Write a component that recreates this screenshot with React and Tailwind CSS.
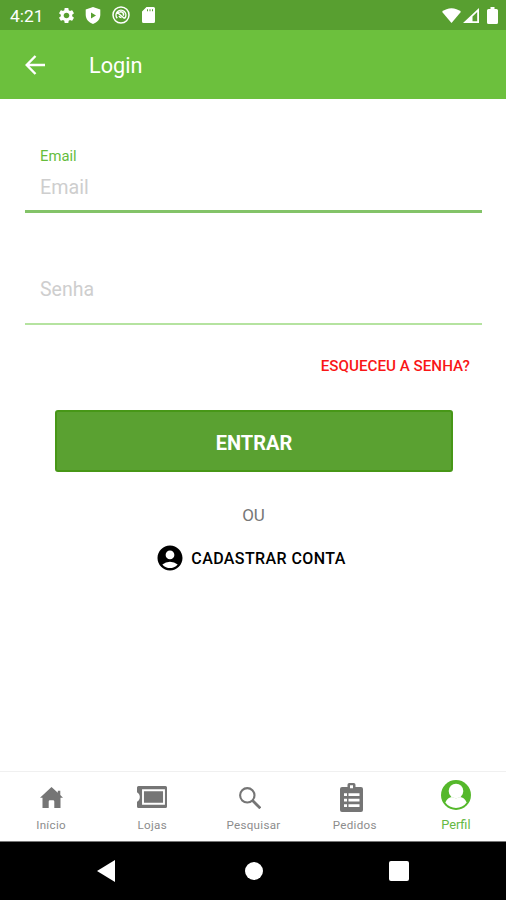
import { MdAccountCircle, MdSettings } from 'react-icons/md'

export default function App() {
  return (
    <div className="flex flex-col w-full h-[900px] bg-white overflow-hidden font-['Roboto',sans-serif]">
      <StatusBar />
      <header className="flex items-center h-[69px] pl-[25px] bg-[#6cc03d] text-white">
        <svg className="w-[21px] h-5" viewBox="0 0 21 20" fill="none" stroke="currentColor" strokeWidth="2.4">
          <path d="M20 10H2M10.500 1L1.700 10l8.800 9" />
        </svg>
        <h1 className="ml-[43px] text-[21.7px] leading-7 pt-[3px]">Login</h1>
      </header>
      <LoginForm />
      <TabBar />
      <SystemNav />
    </div>
  )
}

function StatusBar() {
  return (
    <div className="flex items-center h-[30px] shrink-0 pl-[10px] pr-2 bg-[#589f30] text-white">
      <span className="w-[47px] text-[17.400px] leading-5 pt-0.5">4:21</span>
      <MdSettings className="w-[19px] h-[19px]" />
      <svg className="w-4 h-[17px] ml-[9px]" viewBox="0 0 16 17" fill="currentColor">
        <path fillRule="evenodd" d="M8 0l7.3 2.6v5.2c0 4.2-3 7.9-7.3 9.2C3.700 15.700.7 12 .7 7.800V2.600zM6 5.500v6l5-3z" />
      </svg>
      <svg className="w-[18px] h-[18px] ml-[11px]" viewBox="0 0 18 18" fill="none" stroke="currentColor" strokeWidth="1.500">
        <circle cx="9" cy="9" r="8" />
        <path d="M5.200 12.200a4.900 4.900 0 1 1 7.500 0M4.500 7.500l2.500-1M6.500 7.500l6 5" />
        <path d="M7.200 6.500a2.600 2.600 0 0 1 4 3.200M7 10a2.600 2.600 0 0 0 2.500 1.500" />
      </svg>
      <svg className="w-[13px] h-4 ml-3" viewBox="0 0 13 16" fill="currentColor">
        <path fillRule="evenodd" d="M4.500 0H11.500Q13 0 13 1.500V14.500Q13 16 11.500 16H1.500Q0 16 0 14.500V4.500zM5 2.300v2h1v-2zM7.500 2.300v2h1v-2zM10 2.300v2h1v-2z" />
      </svg>
      <div className="flex items-center ml-auto">
        <svg className="w-[19px] h-[15px]" viewBox="0 0 19 15" fill="currentColor">
          <path d="M9.500 15L0 3.800C5.500-1 13.500-1 19 3.800z" />
        </svg>
        <svg className="w-4 h-[15px] ml-[2px] mr-[8px]" viewBox="0 0 16 15" fill="currentColor">
          <path fillRule="evenodd" d="M0 15L16 0v15zM9.500 8.500v4.700h4.700V4.100z" />
        </svg>
        <svg className="w-[11px] h-[17px]" viewBox="0 0 11 17" fill="currentColor">
          <path d="M3.500 0h4v2H9.500Q11 2 11 3.500v12Q11 17 9.500 17h-8Q0 17 0 15.500v-12Q0 2 1.500 2h2z" />
        </svg>
      </div>
    </div>
  )
}

function LoginForm() {
  return (
    <main className="flex flex-col flex-1 pl-[25px] pr-6">
      <label className="flex flex-col h-[114px] pt-[47px] pl-[15px] border-b-3 border-[#83c368]">
        <span className="text-[14.800px] leading-5 text-[#65bd3c]">Email</span>
        <span className="mt-[10px] text-[19.700px] leading-6 text-[#cecece]">Email</span>
      </label>
      <label className="flex flex-col h-[112px] pt-[65px] pl-[15px] border-b-2 border-[#b5e3a0]">
        <span className="text-[19.500px] leading-6 text-[#cecece]">Senha</span>
      </label>
      <button className="self-end mt-[31px] mr-[12px] text-[15.200px] leading-5 font-medium text-[#f91616]">
        ESQUECEU A SENHA?
      </button>
      <button className="h-[62px] mt-[34px] ml-[30px] mr-[29px] pt-[3px] rounded-[3px] border-2 border-[#479717] bg-[#5aa131] text-[20px] font-bold text-white">
        ENTRAR
      </button>
      <p className="mt-[31px] text-center text-[17px] leading-6 text-[#777]">OU</p>
      <button className="flex items-center self-center mt-[16px] mr-[6px] text-black">
        <MdAccountCircle className="w-[30px] h-[30px]" />
        <span className="ml-1.5 pt-px text-[16px] leading-6 font-medium tracking-[0.4px]">CADASTRAR CONTA</span>
      </button>
    </main>
  )
}

function TabBar() {
  return (
    <nav className="grid grid-cols-5 h-[70px] shrink-0 border-t border-[#f0f0f0] text-[#757575]">
      <Tab label="Início">
        <svg className="w-[23px] h-[21px]" viewBox="0 0 23 21" fill="currentColor">
          <path d="M11.500 0L0 10.700h2.500V21h6.200v-6.500q0-1.200 1.200-1.200h3.200q1.200 0 1.200 1.200V21h6.200V10.700H23L20.300 8V3.800h-2.500v2z" />
        </svg>
      </Tab>
      <Tab label="Lojas">
        <svg className="w-[30px] h-[22px] -mt-px" viewBox="0 0 30 22">
          <path fill="currentColor" d="M0 1.500Q0 0 1.500 0H28.500Q30 0 30 1.500v19Q30 22 28.500 22h-27Q0 22 0 20.500v-4.700c3.800-2 3.800-7.600 0-9.600z" />
          <path fill="none" stroke="#fff" strokeWidth="1.900" d="M6 4.200h21v13.600H6z" />
        </svg>
      </Tab>
      <Tab label="Pesquisar">
        <svg className="w-[22px] h-[22px] -ml-[7px]" viewBox="0 0 22 22" fill="none" stroke="currentColor" strokeWidth="2.100">
          <circle cx="8.300" cy="8.300" r="7.200" />
          <path d="M13.300 13.300l8 8" strokeWidth="2.700" />
        </svg>
      </Tab>
      <Tab label="Pedidos">
        <svg className="w-[23px] h-[29px] -ml-[7px] -mt-px" viewBox="0 0 23 29">
          <path fill="currentColor" fillRule="evenodd" d="M2 4h5.500V1.800Q7.500 0 9.300 0h4.400q1.800 0 1.800 1.800V4H21q2 0 2 2v21q0 2-2 2H2q-2 0-2-2V6q0-2 2-2zM10 2.200v3h3v-3z" />
          <path stroke="#fff" strokeWidth="2.800" d="M4 11.700h3M8.500 11.700h11M4 17.200h3M8.500 17.200h11M4 22.700h3M8.500 22.700h11" />
        </svg>
      </Tab>
      <Tab label="Perfil" active>
        <svg className="w-[30px] h-[30px] mb-[5px]" viewBox="0 0 30 30">
          <circle cx="15" cy="15" r="15" fill="#55b82b" />
          <circle cx="15" cy="11" r="7.300" fill="#fff" />
          <path fill="#fff" d="M4.300 22.500c1.500-3.500 3.800-5.200 6.700-5.500q4 2.300 8 0c2.900.3 5.200 2 6.700 5.500a13.200 13.200 0 0 1-21.400 0z" />
        </svg>
      </Tab>
    </nav>
  )
}

function Tab({ label, active, children }) {
  return (
    <button className={active ? 'flex flex-col items-center pl-px text-[#65b944]' : 'flex flex-col items-center pl-px text-[#757575]'}>
      <span className="flex items-center justify-center h-[51px] -mb-[7px]">{children}</span>
      <span className={active ? 'text-[12.800px] leading-[18px]' : 'text-[11.600px] leading-[18px] tracking-[0.3px] text-[#8c8c8c]'}>
        {label}
      </span>
    </button>
  )
}

function SystemNav() {
  return (
    <div className="flex items-center justify-between h-[59px] shrink-0 pl-[97px] pr-[97px] border-t border-[#777] bg-black">
      <svg className="w-[18px] h-[22px]" viewBox="0 0 18 22" fill="#fff">
        <path d="M0 11L18 0v22z" />
      </svg>
      <span className="w-[18px] h-[18px] ml-[3px] rounded-full bg-white" />
      <span className="w-5 h-5 rounded-xs bg-white" />
    </div>
  )
}
